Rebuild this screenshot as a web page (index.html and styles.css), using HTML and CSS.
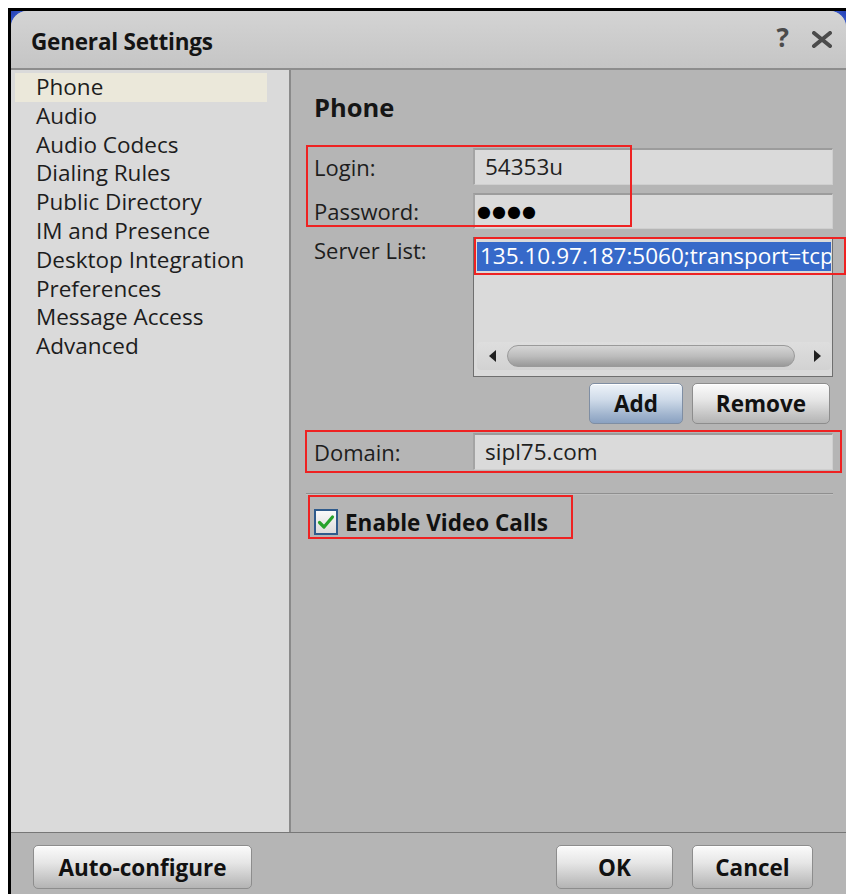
FILE: index.html
```html
<!DOCTYPE html>
<html lang="en">
<head>
<meta charset="utf-8">
<title>General Settings</title>
<link rel="stylesheet" href="styles.css">
</head>
<body>
<div class="window">
  <div class="dialog">
    <header class="titlebar">
      <h1 class="title">General Settings</h1>
      <div class="title-actions">
        <span class="help">?</span>
        <svg class="close" width="22" height="17" viewBox="0 0 22 17" aria-label="Close">
          <path d="M3 2 L19 15 M19 2 L3 15" stroke="#4b4b4b" stroke-width="4" stroke-linecap="round"/>
        </svg>
      </div>
    </header>

    <div class="main">
      <nav class="sidebar">
        <div class="nav-item selected">Phone</div>
        <div class="nav-item">Audio</div>
        <div class="nav-item">Audio Codecs</div>
        <div class="nav-item">Dialing Rules</div>
        <div class="nav-item">Public Directory</div>
        <div class="nav-item">IM and Presence</div>
        <div class="nav-item">Desktop Integration</div>
        <div class="nav-item">Preferences</div>
        <div class="nav-item">Message Access</div>
        <div class="nav-item">Advanced</div>
      </nav>

      <section class="content">
        <h2 class="heading">Phone</h2>

        <div class="row row-login">
          <label class="label">Login:</label>
          <div class="field">54353u</div>
        </div>
        <div class="row row-password">
          <label class="label">Password:</label>
          <div class="field field-password">●●●●</div>
        </div>
        <div class="row row-server">
          <label class="label label-top">Server List:</label>
          <div class="listbox">
            <div class="list-item selected-item">135.10.97.187:5060;transport=tcp</div>
            <div class="hscroll">
              <span class="arrow arrow-left"></span>
              <span class="thumb"></span>
              <span class="arrow arrow-right"></span>
            </div>
          </div>
        </div>
        <div class="list-buttons">
          <button class="btn btn-default">Add</button>
          <button class="btn btn-remove">Remove</button>
        </div>
        <div class="row row-domain">
          <label class="label">Domain:</label>
          <div class="field">sipl75.com</div>
        </div>

        <div class="separator"></div>

        <label class="check-row">
          <span class="checkbox">
            <svg width="18" height="16" viewBox="0 0 18 16">
              <path d="M2.5 8.5 L7 13 L15.5 3" fill="none" stroke="#27a32c" stroke-width="3.2" stroke-linecap="round" stroke-linejoin="round"/>
            </svg>
          </span>
          <span class="check-label">Enable Video Calls</span>
        </label>

        <span class="mark mark-login"></span>
        <span class="mark mark-server"></span>
        <span class="mark mark-domain"></span>
        <span class="mark mark-check"></span>
      </section>
    </div>

    <footer class="footer">
      <button class="btn btn-auto">Auto-configure</button>
      <div class="footer-right">
        <button class="btn btn-ok">OK</button>
        <button class="btn btn-cancel">Cancel</button>
      </div>
    </footer>
  </div>
</div>
</body>
</html>
```

FILE: styles.css
```css
* {
  box-sizing: border-box;
}

html, body {
  margin: 0;
  padding: 0;
  background: #ffffff;
}

body {
  font-family: "Open Sans", "Noto Sans", "DejaVu Sans", sans-serif;
  color: #1b1b1b;
  overflow: hidden;
}

/* outer window frame with its blue chrome peeking through the corners */
.window {
  margin: 8px 0 0 8px;
  width: 838px;
  height: 886px;
  border-left: 3px solid #000;
  border-top: 3px solid #000;
  background: radial-gradient(circle at 0 0, #2440b4 0, #3a5ccd 12px, #c9c9c9 24px) top left / 40px 40px no-repeat,
              radial-gradient(circle at 100% 0, #2440b4 0, #3a5ccd 12px, #c9c9c9 24px) top right / 40px 40px no-repeat,
              #b5b5b5;
}

.dialog {
  height: 100%;
  display: flex;
  flex-direction: column;
  border-radius: 16px 16px 0 0;
  overflow: hidden;
  background: #b5b5b5;
}

/* title bar */
.titlebar {
  height: 59px;
  flex: none;
  display: flex;
  align-items: center;
  justify-content: space-between;
  padding: 3px 13px 0 20px;
  background: linear-gradient(#d4d4d4, #c5c5c5);
  border-bottom: 2px solid #8d8d8d;
}

.title {
  margin: 0;
  font-size: 22.5px;
  font-weight: 700;
  color: #141414;
  letter-spacing: -0.2px;
}

.title-actions {
  display: flex;
  align-items: center;
  gap: 22px;
  margin-top: -9px;
}

.help {
  font-size: 26px;
  font-weight: 700;
  color: #4b4b4b;
  line-height: 1;
}

.close {
  display: block;
  margin-top: 6px;
}

/* body: navigation + page */
.main {
  flex: 1;
  display: flex;
  min-height: 0;
}

.sidebar {
  width: 280px;
  flex: none;
  padding: 3px 22px 0 4px;
  background: #dadada;
  border-right: 2px solid #8a8a8a;
}

.nav-item {
  height: 28.8px;
  line-height: 28.8px;
  padding-left: 21px;
  font-size: 22.5px;
  color: #1d1d1d;
  white-space: nowrap;
}

.nav-item.selected {
  background: #ebe8da;
}

.content {
  position: relative;
  flex: 1;
  min-width: 0;
  padding: 22px 13px 0 23px;
  background: #b5b5b5;
}

.heading {
  margin: 0;
  height: 30px;
  line-height: 30px;
  font-size: 25.5px;
  font-weight: 700;
  color: #151515;
}

.row {
  display: flex;
  align-items: center;
}

.label {
  width: 159px;
  flex: none;
  font-size: 22px;
  color: #1d1d1d;
}

.label-top {
  align-self: flex-start;
  margin-top: -2px;
}

.field {
  flex: 1;
  min-width: 0;
  height: 37px;
  line-height: 34px;
  padding-left: 10px;
  font-size: 22.5px;
  color: #1f1f1f;
  background: #dadada;
  border-top: 2px solid #9c9c9c;
  border-left: 2px solid #a4a4a4;
  border-right: 1px solid #cfcfcf;
  border-bottom: 1px solid #cfcfcf;
}

.row-login {
  margin-top: 26px;
}

.row-password {
  margin-top: 8px;
}

.row-password .field {
  height: 36px;
}

.field-password {
  padding-left: 2px;
  font-size: 16px;
  letter-spacing: 1px;
  color: #000;
  line-height: 33px;
}

.row-server {
  margin-top: 8px;
  align-items: stretch;
}

.listbox {
  flex: 1;
  min-width: 0;
  height: 140px;
  display: flex;
  flex-direction: column;
  background: #dadada;
  border: 1px solid #6f6f6f;
  padding: 4px 1px 6px 3px;
}

.list-item {
  height: 29px;
  line-height: 28px;
  padding-left: 3px;
  font-size: 22.5px;
  white-space: nowrap;
  overflow: hidden;
}

.selected-item {
  background: #3669c9;
  color: #ffffff;
}

/* horizontal scrollbar */
.hscroll {
  margin-top: auto;
  height: 28px;
  display: flex;
  align-items: center;
  padding: 0 6px 0 12px;
  background: linear-gradient(#dedede, #d2d2d2);
  border-radius: 4px;
}

.arrow {
  width: 0;
  height: 0;
  flex: none;
  border-top: 6px solid transparent;
  border-bottom: 6px solid transparent;
}

.arrow-left {
  border-right: 7px solid #202020;
}

.arrow-right {
  border-left: 7px solid #202020;
}

.thumb {
  width: 288px;
  flex: none;
  height: 22px;
  margin: 0 19px 0 11px;
  border-radius: 11px;
  background: linear-gradient(#d5d5d5, #bdbdbd 50%, #999999);
  border: 1px solid #9a9a9a;
}

/* buttons */
.btn {
  font-family: inherit;
  font-size: 22.5px;
  font-weight: 700;
  color: #111;
  height: 41px;
  padding: 0;
  border: 1px solid #8d8d8d;
  border-radius: 5px;
  background: linear-gradient(#fbfbfb, #e6e6e6 40%, #c4c4c4 80%, #b4b4b4);
  box-shadow: inset 0 1px 0 #ffffff;
}

.list-buttons {
  display: flex;
  justify-content: flex-end;
  gap: 9px;
  margin-top: 6px;
  padding-right: 3px;
}

.btn-default {
  width: 94px;
  border-color: #7f8ea3;
  background: linear-gradient(#eef3f9, #cfdbe9 40%, #9fb3cd 80%, #8aa1c1);
}

.btn-remove {
  width: 138px;
}

.row-domain {
  margin-top: 9px;
}

.separator {
  margin: 23px 0 0 -8px;
  height: 2px;
  border-top: 1px solid #8f8f8f;
  border-bottom: 1px solid #c0c0c0;
}

.check-row {
  display: flex;
  align-items: center;
  gap: 7px;
  margin-top: 14px;
  height: 26px;
}

.checkbox {
  width: 24px;
  height: 26px;
  flex: none;
  display: flex;
  align-items: center;
  justify-content: center;
  border: 2px solid #2f5b8c;
  background: linear-gradient(#fafafa, #dcdcdc);
}

.check-label {
  font-size: 22.5px;
  font-weight: 700;
  color: #111;
}

/* red annotation frames laid over the form */
.mark {
  position: absolute;
  border: 2px solid #ee2222;
  pointer-events: none;
}

.mark-login {
  left: 15px;
  top: 75px;
  width: 326px;
  height: 82px;
}

.mark-server {
  left: 183px;
  top: 167px;
  width: 372px;
  height: 38px;
}

.mark-domain {
  left: 14px;
  top: 360px;
  width: 537px;
  height: 43px;
}

.mark-check {
  left: 17px;
  top: 425px;
  width: 265px;
  height: 44px;
}

/* footer */
.footer {
  height: 62px;
  flex: none;
  display: flex;
  justify-content: space-between;
  padding: 12px 33px 0 22px;
  border-top: 1px solid #777777;
  background: #b5b5b5;
}

.btn-auto {
  width: 219px;
  height: 44px;
}

.footer-right {
  display: flex;
  gap: 19px;
}

.btn-ok {
  width: 117px;
  height: 44px;
}

.btn-cancel {
  width: 121px;
  height: 44px;
}
```
